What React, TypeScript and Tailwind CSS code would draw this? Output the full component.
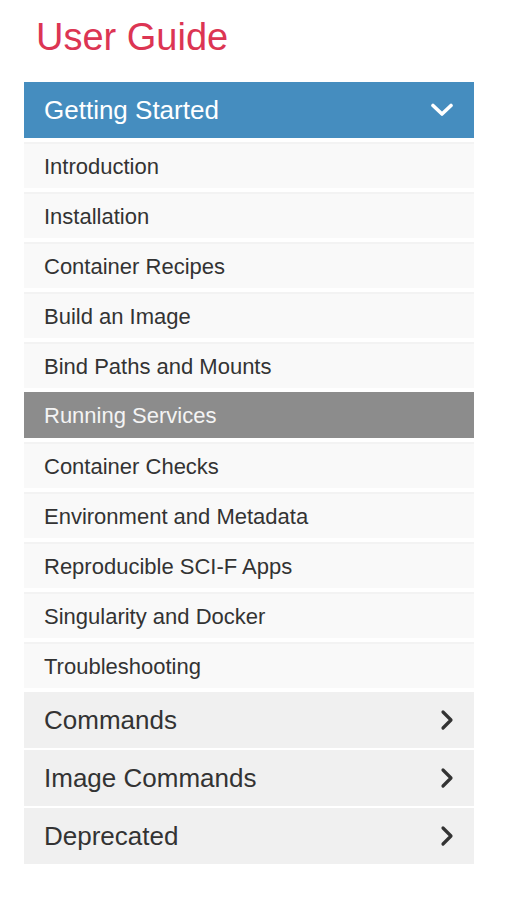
const items = [
  "Introduction",
  "Installation",
  "Container Recipes",
  "Build an Image",
  "Bind Paths and Mounts",
  "Running Services",
  "Container Checks",
  "Environment and Metadata",
  "Reproducible SCI-F Apps",
  "Singularity and Docker",
  "Troubleshooting",
];

const active = "Running Services";

const sections = ["Commands", "Image Commands", "Deprecated"];

function ChevronDown() {
  return (
    <svg width="24" height="14" viewBox="0 0 24 14" fill="none">
      <path d="M3 2.5 L12 11 L21 2.5" stroke="#fff" strokeWidth="3.6" strokeLinecap="round" strokeLinejoin="round" />
    </svg>
  );
}

function ChevronRight() {
  return (
    <svg width="14" height="22" viewBox="0 0 14 22" fill="none">
      <path d="M3 3 L11 11 L3 19" stroke="#333" strokeWidth="3.2" strokeLinecap="round" strokeLinejoin="round" />
    </svg>
  );
}

export default function App() {
  return (
    <div className="min-h-screen bg-white font-['Liberation_Sans',Arial,sans-serif]">
      <div className="ml-6 w-[450px] pt-[18px]">
        <h1 className="ml-3 text-[38px] leading-none text-[#dc3553]">User Guide</h1>

        <nav className="mt-[26px]">
          <div className="flex h-[56px] items-center justify-between bg-[#458dbf] pl-5 pr-[20px]">
            <span className="text-[26px] text-white">Getting Started</span>
            <ChevronDown />
          </div>

          <ul className="pt-1">
            {items.map((item) => (
              <li
                key={item}
                className={
                  item === active
                    ? "mb-1 flex h-[46px] items-center bg-[#8c8c8c] pl-5 text-[22px] text-[#f4f4f4]"
                    : "mb-1 flex h-[46px] items-center border-t-2 border-[#f3f3f3] bg-[#f9f9f9] pl-5 text-[22px] text-[#333]"
                }
              >
                {item}
              </li>
            ))}
          </ul>

          <div className="flex flex-col gap-[2px]">
            {sections.map((s) => (
              <div
                key={s}
                className="flex h-[56px] items-center justify-between bg-[#f0f0f0] pl-5 pr-[20px] text-[26px] text-[#333]"
              >
                <span>{s}</span>
                <ChevronRight />
              </div>
            ))}
          </div>
        </nav>
      </div>
    </div>
  );
}
